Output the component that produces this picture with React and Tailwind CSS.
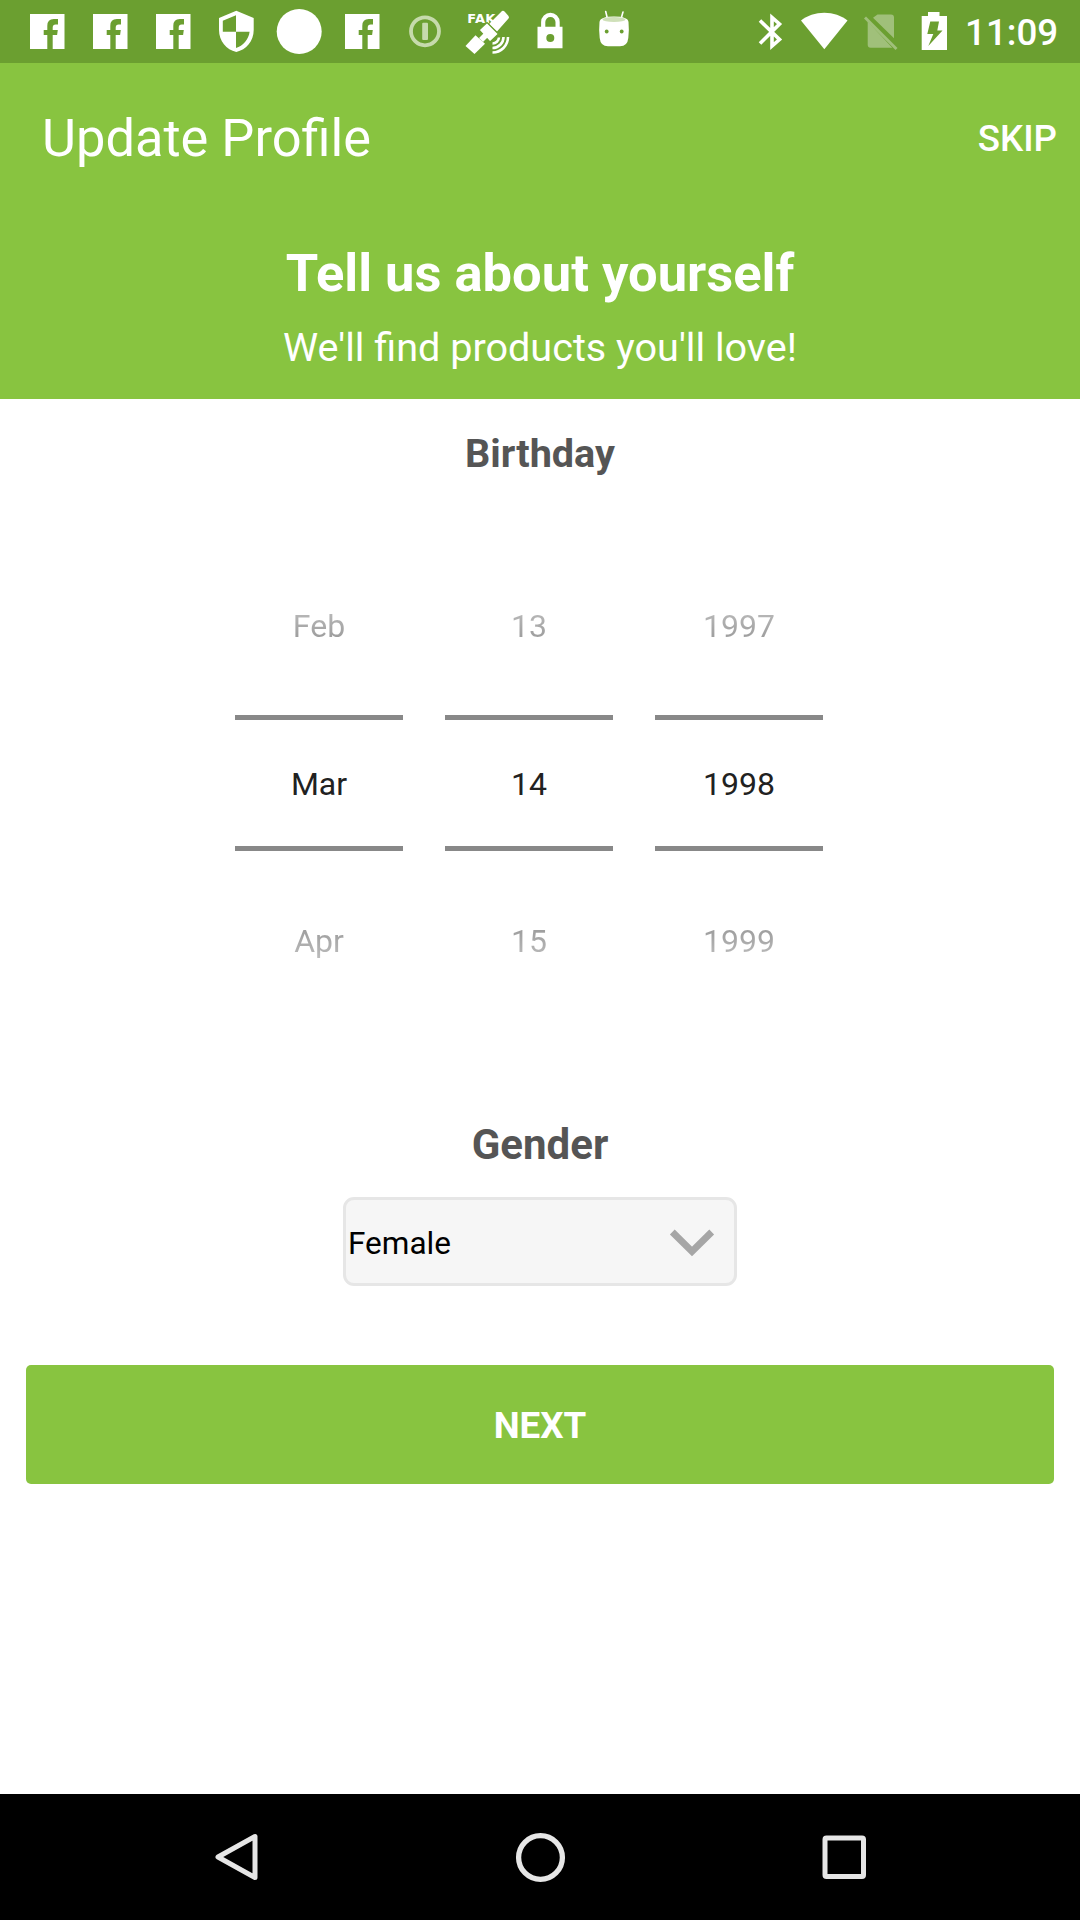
import React from "react";

function Facebook() {
  return (
    <svg className="h-[63px] w-[63px]" viewBox="0 0 63 63" fill="#fff">
      <path d="M14 14h34.5v35H36.7V35h4.4l.7-5h-5.1v-2.5q0-3 3-3h2.3V19h-4.2q-6.5 0-6.5 6.8V30h-3.6v5h3.6v14H14z" />
    </svg>
  );
}

function Shield() {
  return (
    <svg className="h-[63px] w-[63px]" viewBox="0 0 63 63" fill="#fff" fillRule="evenodd">
      <path d="M31.3 10.7 48.7 18v12c0 11-7.4 19.8-17.4 22C21.4 49.8 14 41 14 30V18zM31 15.2l-13.2 5.6v10.9H31zM31 31.7V48c7-2.2 12.6-8.4 13.6-16.3z" />
    </svg>
  );
}

function Disc() {
  return (
    <svg className="h-[63px] w-[63px]" viewBox="0 0 63 63">
      <circle cx="31.2" cy="31.5" r="22.5" fill="#fff" />
    </svg>
  );
}

function Info() {
  return (
    <svg className="h-[63px] w-[63px]" viewBox="0 0 63 63">
      <circle cx="31" cy="31.3" r="14" fill="none" stroke="#c6daac" strokeWidth="3.8" />
      <rect x="28.2" y="22.8" width="5.8" height="17.2" rx="1" fill="#c6daac" />
    </svg>
  );
}

function FakeGps() {
  return (
    <svg className="h-[63px] w-[63px]" viewBox="0 0 63 63" fill="#fff">
      <text x="10.3" y="22.8" fontSize="13" fontWeight="700" letterSpacing="0.3" fontFamily="DejaVu Sans, sans-serif">FAK</text>
      <path d="M45 11q1.500-.8 3 1l3.500 4q1 1.500 0 2.500L40 31.500l-8-7.500z" />
      <path stroke="#6b9f30" strokeWidth="1.200" strokeLinejoin="round" d="m22 30 8-7.500L41.500 34 33 42z" />
      <path d="m18.500 35.200 9.500 8.500L17.500 54 8.500 46z" />
      <path d="m22 38 5-5 4 4-5 5z" />
      <g fill="none" stroke="#fff" strokeWidth="2.600">
        <path d="M51 37A15.500 15.500 0 0 1 35.500 52.500" />
        <path d="M46.500 37A11 11 0 0 1 35.500 48" />
        <path d="M42 37.500a6.500 6.500 0 0 1-6.500 6" />
      </g>
    </svg>
  );
}

function Lock() {
  return (
    <svg className="h-[63px] w-[63px]" viewBox="0 0 63 63">
      <path d="M23.200 28v-6a7.200 7.200 0 0 1 14.400 0v6" fill="none" stroke="#fff" strokeWidth="4.200" />
      <path fillRule="evenodd" fill="#fff" d="M17.500 26.700h25v21.600h-25zM30.300 34a4 4 0 1 0 0 8 4 4 0 0 0 0-8z" />
    </svg>
  );
}

function AndroidHead() {
  return (
    <svg className="h-[63px] w-[63px]" viewBox="0 0 63 63">
      <path d="M22.700 11.500 24.500 19M40 12l-2 7" stroke="#fff" strokeWidth="1.600" strokeLinecap="round" />
      <path fill="#fff" d="M16.500 22Q17 16.500 31 16.500T45.500 22q.8 8-.2 16-.8 8.300-8.300 8.300H25q-7.500 0-8.300-8.300-1-8-.2-16z" />
      <ellipse cx="31" cy="19.500" rx="11.500" ry="2.600" fill="#cfe0b9" />
      <circle cx="23.700" cy="31.500" r="1.900" fill="#6b9f30" />
      <circle cx="38.700" cy="31.500" r="1.900" fill="#6b9f30" />
    </svg>
  );
}

function StatusBar() {
  return (
    <div className="flex h-[63px] items-center bg-[#6b9f30] pl-4">
      <Facebook />
      <Facebook />
      <Facebook />
      <Shield />
      <Disc />
      <Facebook />
      <Info />
      <FakeGps />
      <Lock />
      <AndroidHead />
      <svg className="ml-[109px] h-[63px] w-8" viewBox="0 0 32 63" fill="none" stroke="#fff" strokeWidth="3.600">
        <path d="M5 20.500 24.500 39.500 17 46V17.500L24.500 24 5 43.500" />
      </svg>
      <svg className="ml-3 h-[63px] w-[50px]" viewBox="0 0 50 63" fill="#fff">
        <path d="M25.300 49.300 2 20.500C8 15.500 16.500 12.700 25.300 12.700S42.500 15.500 48.500 20.500z" />
      </svg>
      <svg className="ml-[13px] h-[63px] w-10" viewBox="0 0 40 63">
        <path fill="#a0c07a" d="M15.500 14.500H29q3 0 3 3v20.800L11 17.800zM5.700 21.500 30.300 47.700H8.700q-3 0-3-3z" />
        <path d="M3 17.500 34.500 49" stroke="#a0c07a" strokeWidth="2.800" />
      </svg>
      <svg className="ml-[17px] h-[63px] w-[30px]" viewBox="0 0 30 63" fill="#fff" fillRule="evenodd">
        <path d="M9 12h11.500v4H28v34H2.700V16H9zM11.300 21.500 8.300 34h6L9.300 46 23.500 30.500h-5.200L20 21.500z" />
      </svg>
      <span className="ml-4 pt-[3px] text-[36.75px] leading-[42px] font-medium text-white">11:09</span>
    </div>
  );
}

function PickerColumn({ before, value, after }) {
  return (
    <div className="flex w-[168px] flex-col text-center text-[32px]">
      <div className="flex h-[156px] items-center justify-center">
        <span className="bg-linear-to-b from-[#bdbdbd] to-[#979797] bg-clip-text leading-[36px] text-transparent">{before}</span>
      </div>
      <div className="mt-[11px] flex h-[136px] items-center justify-center border-y-[5px] border-[#888888] pt-[2px] text-[#212121]">
        {value}
      </div>
      <div className="mt-3 flex h-[155px] items-center justify-center">
        <span className="bg-linear-to-b from-[#979797] to-[#bdbdbd] bg-clip-text leading-[36px] text-transparent">{after}</span>
      </div>
    </div>
  );
}

const columns = [
  { before: "Feb", value: "Mar", after: "Apr" },
  { before: "13", value: "14", after: "15" },
  { before: "1997", value: "1998", after: "1999" },
];

export default function App() {
  return (
    <div className="flex h-[1920px] w-[1080px] flex-col overflow-hidden bg-white font-[Roboto,sans-serif]">
      <StatusBar />
      <header className="h-[336px] bg-[#88c440] text-white">
        <div className="flex h-[151px] items-center justify-between pr-[23px] pl-[42px]">
          <h1 className="pb-px text-[52.4px] leading-[62px]">Update Profile</h1>
          <button className="text-[36.75px] leading-[44px] font-medium">SKIP</button>
        </div>
        <h2 className="mt-[28px] text-center text-[52.5px] leading-[62px] font-bold">Tell us about yourself</h2>
        <p className="mt-[19px] text-center text-[39.6px] leading-[50px]">We'll find products you'll love!</p>
      </header>
      <main className="flex flex-1 flex-col">
        <h3 className="mt-[32px] text-center text-[39.6px] leading-[46px] font-bold text-[#555555]">Birthday</h3>
        <div className="mt-[71px] ml-[235px] flex gap-[42px]">
          {columns.map((c) => (
            <PickerColumn key={c.value} {...c} />
          ))}
        </div>
        <h3 className="mt-[103px] text-center text-[42px] leading-[48px] font-bold text-[#555555]">Gender</h3>
        <div className="mt-[28px] ml-[343px] flex h-[89px] w-[394px] items-center justify-between rounded-[11px] border-[3px] border-[#e6e6e6] bg-[#f6f6f6] pr-[19px] pl-[2px]">
          <span className="pt-[5px] text-[31.5px] leading-9 text-black">Female</span>
          <svg className="mt-[2px] h-7 w-[46px]" viewBox="0 0 46 28">
            <path d="M3.300 3 23 22.500 42.700 3" fill="none" stroke="#a6a6a6" strokeWidth="6.800" />
          </svg>
        </div>
        <button className="mx-[26px] mt-[79px] h-[119px] rounded-[5px] bg-[#88c440] pt-[3px] text-[36.75px] font-bold text-white">
          NEXT
        </button>
      </main>
      <nav className="flex h-[126px] items-center justify-between bg-black pr-[204px] pl-[205px]">
        <svg className="h-[63px] w-[63px]" viewBox="0 0 63 63" fill="none" stroke="#e6e6e6" strokeWidth="5" strokeLinejoin="round">
          <path d="M50 10.500v41L13 31z" />
        </svg>
        <svg className="h-[63px] w-[63px]" viewBox="0 0 63 63" fill="none" stroke="#e6e6e6" strokeWidth="5.300">
          <circle cx="31.500" cy="31.500" r="21.900" />
        </svg>
        <svg className="h-[63px] w-[63px]" viewBox="0 0 63 63" fill="none" stroke="#e6e6e6" strokeWidth="5">
          <rect x="12" y="12" width="38.500" height="38.500" rx="1.500" />
        </svg>
      </nav>
    </div>
  );
}
